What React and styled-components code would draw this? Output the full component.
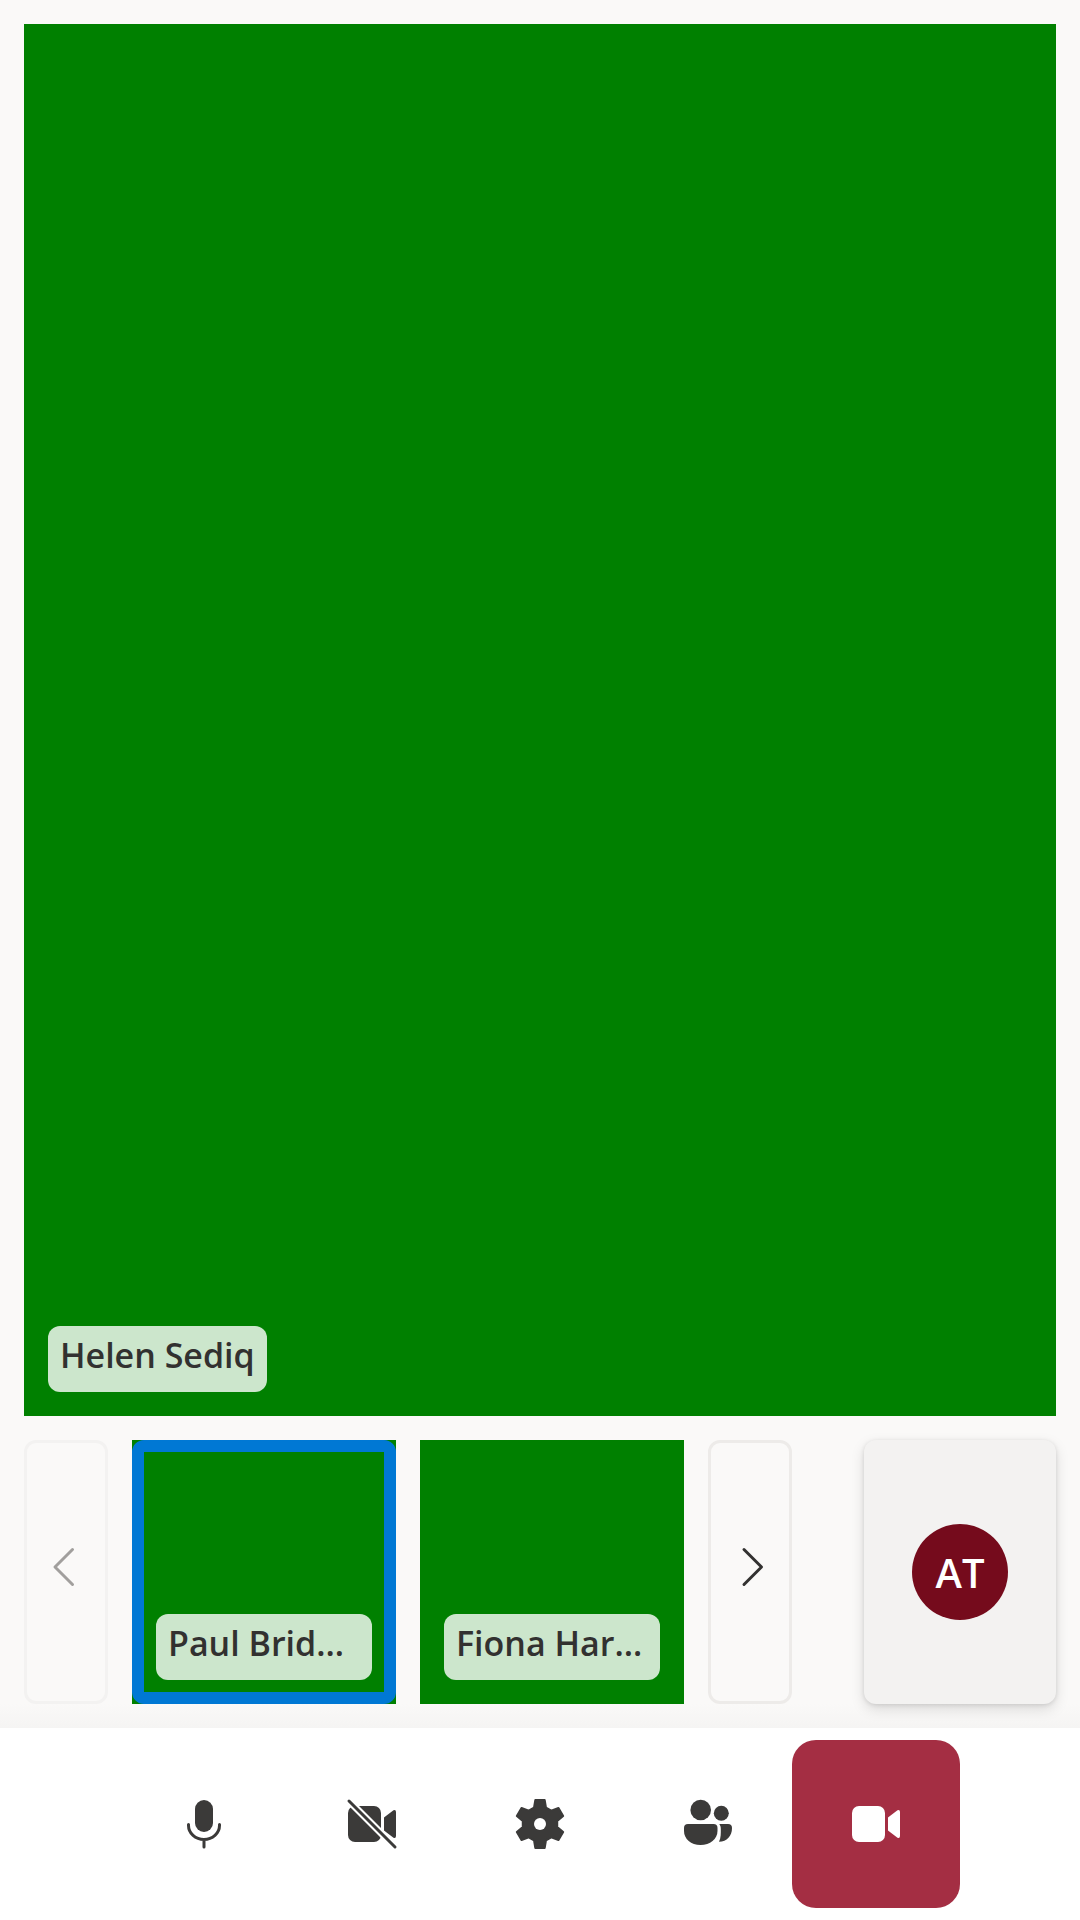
import React from "react";
import styled, { createGlobalStyle } from "styled-components";

const Global = createGlobalStyle`
  html, body { margin: 0; padding: 0; background: #ffffff; }
  * { box-sizing: border-box; }
`;

const Page = styled.div`
  width: 1080px;
  height: 1920px;
  display: flex;
  flex-direction: column;
  font-family: "Open Sans", "Noto Sans", sans-serif;
  color: #323130;
`;

const Stage = styled.main`
  flex: 1;
  min-height: 0;
  display: flex;
  flex-direction: column;
  gap: 24px;
  padding: 24px;
  background: linear-gradient(to bottom, #faf9f8 98.6%, #f5f4f3 100%);
`;

const Spotlight = styled.section`
  flex: 1;
  min-height: 0;
  position: relative;
  background: #008000;
`;

const NameTag = styled.div`
  position: absolute;
  left: 24px;
  bottom: 24px;
  height: 66px;
  padding: 0 12px 8px;
  display: flex;
  align-items: center;
  border-radius: 12px;
  background: rgba(255, 255, 255, 0.8);
  font-size: 34px;
  font-weight: 600;
  white-space: nowrap;
`;

const ThumbTag = styled(NameTag)`
  right: 24px;
`;

const Strip = styled.section`
  height: 264px;
  display: flex;
  gap: 24px;
`;

const NavButton = styled.button`
  width: 84px;
  padding: 0;
  display: flex;
  align-items: center;
  justify-content: center;
  background: #faf9f8;
  border: 3px solid ${(p) => (p.disabled ? "#f3f2f1" : "#edebe9")};
  border-radius: 12px;
  color: ${(p) => (p.disabled ? "#a19f9d" : "#323130")};
`;

const Thumb = styled.div`
  width: 264px;
  position: relative;
  background: #008000;
`;

const ActiveRing = styled.div`
  position: absolute;
  inset: 0;
  border: 12px solid #0078d4;
  border-radius: 12px;
`;

const SelfCard = styled.div`
  width: 192px;
  margin-left: auto;
  display: flex;
  align-items: center;
  justify-content: center;
  background: #f3f2f1;
  border-radius: 12px;
  box-shadow: 0 5px 14px rgba(0, 0, 0, 0.13), 0 1px 4px rgba(0, 0, 0, 0.11);
`;

const Avatar = styled.div`
  width: 96px;
  height: 96px;
  border-radius: 50%;
  display: flex;
  align-items: center;
  justify-content: center;
  background: #750b1c;
  color: #ffffff;
  font-size: 40px;
  font-weight: 600;
`;

const Toolbar = styled.nav`
  height: 192px;
  padding: 12px 0;
  display: flex;
  justify-content: center;
  background: #ffffff;
`;

const ToolButton = styled.button`
  width: 168px;
  height: 168px;
  padding: 0;
  border: 0;
  border-radius: 24px;
  display: flex;
  align-items: center;
  justify-content: center;
  background: ${(p) => (p.$danger ? "#a42e43" : "transparent")};
  color: ${(p) => (p.$danger ? "#ffffff" : "#3b3a39")};
`;

const Icon = ({ children, size = 48 }) => (
  <svg width={size} height={size} viewBox="0 0 48 48" fill="currentColor" aria-hidden="true" style={{ overflow: "visible" }}>
    {children}
  </svg>
);

const Chevron = ({ left }) => (
  <Icon>
    <path
      d={left ? "M30.5 1.5 L13 19 L30.5 36.5" : "M18 1.5 L35.5 19 L18 36.5"}
      fill="none"
      stroke="currentColor"
      strokeWidth="3"
      strokeLinecap="round"
      strokeLinejoin="round"
    />
  </Icon>
);

const MicIcon = () => (
  <Icon>
    <rect x="15" y="0" width="18" height="32" rx="9" />
    <path d="M8.5 24.5 v1 a15.5 14 0 0 0 31 0 v-1 M24 40 v7" fill="none" stroke="currentColor" strokeWidth="3" strokeLinecap="round" />
  </Icon>
);

const CamShape = () => (
  <>
    <rect x="0" y="6" width="33" height="36" rx="7" />
    <path d="M36 17.5 L45.5 10.3 Q48 9.5 48 12 V36 Q48 38.5 45.5 37.7 L36 30.5 Z" />
  </>
);

const CamIcon = () => (
  <Icon>
    <CamShape />
  </Icon>
);

const CamOffIcon = () => (
  <Icon>
    <CamShape />
    <path d="M-2 -2 L50 50" stroke="#ffffff" strokeWidth="7" />
    <path d="M1 1 L47 47" stroke="currentColor" strokeWidth="3" strokeLinecap="round" />
  </Icon>
);

const gearPath = () => {
  const pt = (deg, r) => {
    const a = ((deg - 90) * Math.PI) / 180;
    return `${(24 + r * Math.cos(a)).toFixed(2)} ${(24 + r * Math.sin(a)).toFixed(2)}`;
  };
  let d = "";
  for (let i = 0; i < 6; i++) {
    const c = i * 60;
    d += `${i === 0 ? "M" : "L"}${pt(c - 20, 17.5)} L${pt(c - 11, 24.5)} L${pt(c + 11, 24.5)} L${pt(c + 20, 17.5)} `;
  }
  return d + "Z";
};

const GearIcon = () => (
  <Icon>
    <path d={gearPath()} stroke="currentColor" strokeWidth="2" strokeLinejoin="round" />
    <circle cx="24" cy="24" r="6" fill="#ffffff" />
  </Icon>
);

const PeopleIcon = () => (
  <Icon>
    <circle cx="16.7" cy="10" r="10.3" />
    <circle cx="37.3" cy="13.3" r="7.5" />
    <path d="M4 24 H29.5 a4 4 0 0 1 4 4 V31 C33.5 39 26 45 16.5 45 S0 39 0 31 V28 a4 4 0 0 1 4 -4 Z" />
    <path d="M35.3 24 H44 a4 4 0 0 1 4 4 C48 36 43 41.7 35 41.7 C37 38 36.8 33 36.8 29 C36.8 27 36.4 25.5 35.3 24 Z" />
  </Icon>
);

export default function App() {
  return (
    <Page>
      <Global />
      <Stage>
        <Spotlight>
          <NameTag>Helen Sediq</NameTag>
        </Spotlight>
        <Strip>
          <NavButton disabled aria-label="Previous">
            <Chevron left />
          </NavButton>
          <Thumb>
            <ActiveRing />
            <ThumbTag>Paul Brid…</ThumbTag>
          </Thumb>
          <Thumb>
            <ThumbTag>Fiona Har…</ThumbTag>
          </Thumb>
          <NavButton aria-label="Next">
            <Chevron />
          </NavButton>
          <SelfCard>
            <Avatar>AT</Avatar>
          </SelfCard>
        </Strip>
      </Stage>
      <Toolbar>
        <ToolButton aria-label="Microphone"><MicIcon /></ToolButton>
        <ToolButton aria-label="Camera off"><CamOffIcon /></ToolButton>
        <ToolButton aria-label="Settings"><GearIcon /></ToolButton>
        <ToolButton aria-label="People"><PeopleIcon /></ToolButton>
        <ToolButton $danger aria-label="Join with video"><CamIcon /></ToolButton>
      </Toolbar>
    </Page>
  );
}
